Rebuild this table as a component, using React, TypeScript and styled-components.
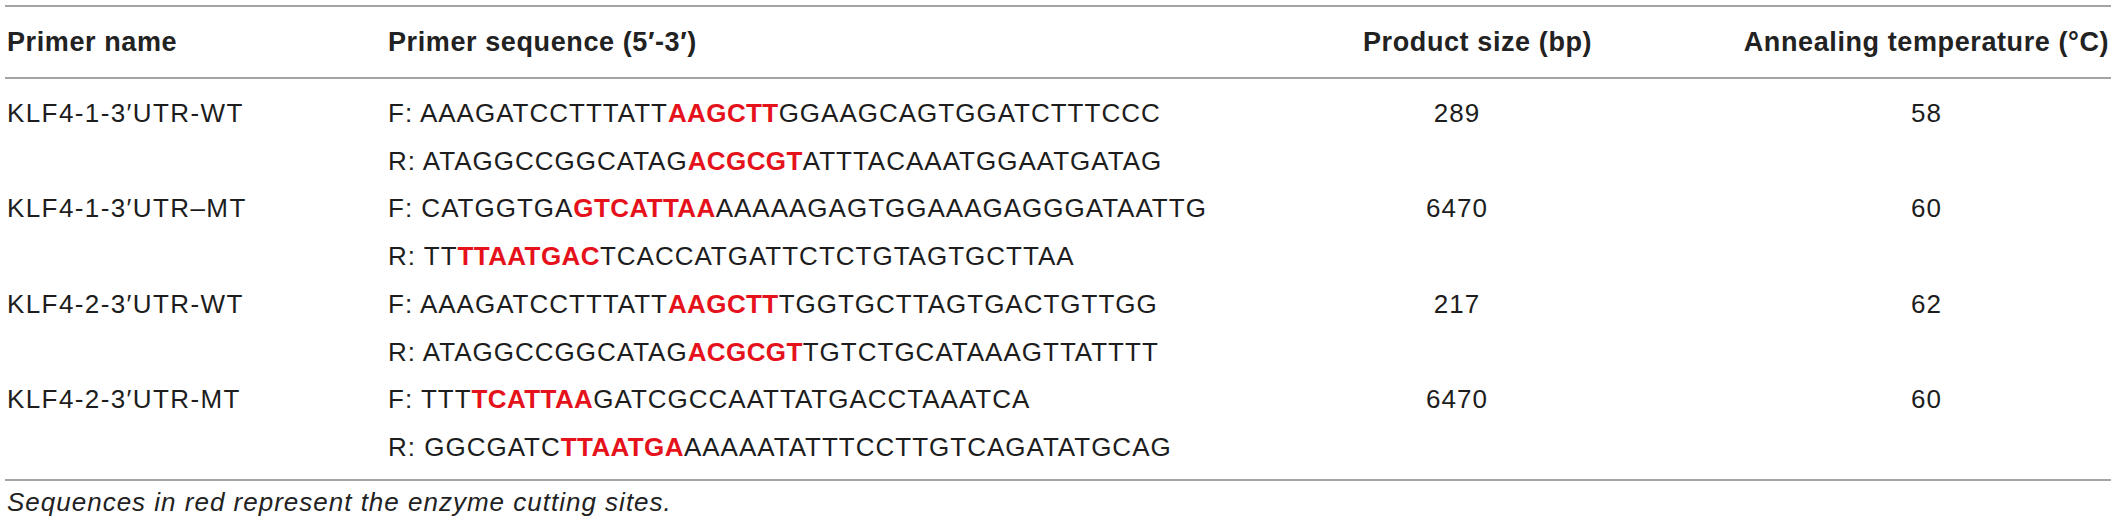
import styled, { createGlobalStyle } from "styled-components";

const GlobalStyle = createGlobalStyle`
  body {
    margin: 0;
    background: #ffffff;
  }
`;

const Wrapper = styled.div`
  width: 2106px;
  padding: 5px 0 0 5px;
  font-family: "Liberation Sans", Arial, Helvetica, sans-serif;
  color: #1d1d1d;
`;

const Table = styled.div`
  border-top: 2px solid #a4a4a4;
  border-bottom: 2px solid #a4a4a4;
`;

const Row = styled.div`
  display: grid;
  grid-template-columns: 381px 977px 379px 369px;
`;

const HeadRow = styled(Row)`
  height: 70px;
  align-items: center;
  border-bottom: 2px solid #a4a4a4;
`;

const Body = styled.div`
  padding: 11px 0 7px;
`;

const Cell = styled.div<{ $center?: boolean; $padRight?: number }>`
  padding-left: ${(p) => (p.$center ? 0 : 2)}px;
  padding-right: ${(p) => p.$padRight || 0}px;
  text-align: ${(p) => (p.$center ? "center" : "left")};
`;

const HeadCell = styled(Cell)`
  font-size: 27px;
  font-weight: 700;
  letter-spacing: 0.6px;
  color: #222;
  white-space: nowrap;
`;

const Line = styled.div<{ $wide?: boolean }>`
  font-size: 26px;
  line-height: 47.7px;
  letter-spacing: ${(p) => (p.$wide ? 1.4 : 1)}px;
  white-space: nowrap;
`;

const Site = styled.span`
  color: #e5121b;
  font-weight: 700;
  letter-spacing: 0.4px;
`;

const Caption = styled.div`
  padding-left: 2px;
  font-size: 26px;
  line-height: 43px;
  font-style: italic;
  letter-spacing: 1px;
  color: #222;
`;

type Primer = {
  name: string;
  forward: string;
  reverse: string;
  size: string;
  temp: string;
};

// enzyme sites are written in [brackets]
const primers: Primer[] = [
  {
    name: "KLF4-1-3′UTR-WT",
    forward: "AAAGATCCTTTATT[AAGCTT]GGAAGCAGTGGATCTTTCCC",
    reverse: "ATAGGCCGGCATAG[ACGCGT]ATTTACAAATGGAATGATAG",
    size: "289",
    temp: "58",
  },
  {
    name: "KLF4-1-3′UTR–MT",
    forward: "CATGGTGA[GTCATTAA]AAAAAGAGTGGAAAGAGGGATAATTG",
    reverse: "TT[TTAATGAC]TCACCATGATTCTCTGTAGTGCTTAA",
    size: "6470",
    temp: "60",
  },
  {
    name: "KLF4-2-3′UTR-WT",
    forward: "AAAGATCCTTTATT[AAGCTT]TGGTGCTTAGTGACTGTTGG",
    reverse: "ATAGGCCGGCATAG[ACGCGT]TGTCTGCATAAAGTTATTTT",
    size: "217",
    temp: "62",
  },
  {
    name: "KLF4-2-3′UTR-MT",
    forward: "TTT[TCATTAA]GATCGCCAATTATGACCTAAATCA",
    reverse: "GGCGATC[TTAATGA]AAAAATATTTCCTTGTCAGATATGCAG",
    size: "6470",
    temp: "60",
  },
];

function Sequence({ label, seq }: { label: string; seq: string }) {
  const parts = seq.split(/(\[[A-Z]+\])/).filter(Boolean);
  return (
    <Line>
      {label}:{" "}
      {parts.map((part, i) =>
        part.startsWith("[") ? (
          <Site key={i}>{part.slice(1, -1)}</Site>
        ) : (
          <span key={i}>{part}</span>
        )
      )}
    </Line>
  );
}

function App() {
  return (
    <>
      <GlobalStyle />
      <Wrapper>
        <Table>
          <HeadRow>
            <HeadCell>Primer name</HeadCell>
            <HeadCell>Primer sequence (5′-3′)</HeadCell>
            <HeadCell $center $padRight={153}>
              Product size (bp)
            </HeadCell>
            <HeadCell $center>Annealing temperature (°C)</HeadCell>
          </HeadRow>
          <Body>
            {primers.map((p) => (
              <Row key={p.name}>
                <Cell>
                  <Line $wide>{p.name}</Line>
                </Cell>
                <Cell>
                  <Sequence label="F" seq={p.forward} />
                  <Sequence label="R" seq={p.reverse} />
                </Cell>
                <Cell $center $padRight={191}>
                  <Line>{p.size}</Line>
                </Cell>
                <Cell $center>
                  <Line>{p.temp}</Line>
                </Cell>
              </Row>
            ))}
          </Body>
        </Table>
        <Caption>Sequences in red represent the enzyme cutting sites.</Caption>
      </Wrapper>
    </>
  );
}

export default App;
